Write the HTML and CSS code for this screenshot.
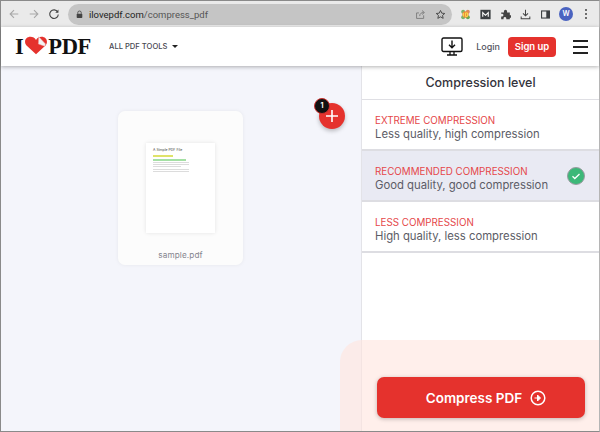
FILE: index.html
```html
<!DOCTYPE html>
<html lang="en">
<head>
  <meta charset="UTF-8">
  <title>Compress PDF</title>
  <link rel="stylesheet" href="styles.css">
</head>
<body>
  <div class="window">
    <div class="toolbar">
      <svg class="tb-icon back" viewBox="0 0 14 14"><path d="M12 7H2.500M7 2.500 2.500 7 7 11.500" fill="none" stroke="#a8a8a8" stroke-width="1.300"/></svg>
      <svg class="tb-icon forward" viewBox="0 0 14 14"><path d="M2 7h9.500M7 2.500 11.500 7 7 11.500" fill="none" stroke="#a8a8a8" stroke-width="1.300"/></svg>
      <svg class="tb-icon reload" viewBox="0 0 14 14"><path d="M11.300 4.600A5 5 0 1 0 12 7.500" fill="none" stroke="#444" stroke-width="1.300"/><path d="M12.200 1.800v3.700H8.500z" fill="#444"/></svg>
      <div class="omnibox">
        <svg class="lock" viewBox="0 0 10 12"><path d="M2.500 5V3.500a2.500 2.500 0 0 1 5 0V5" fill="none" stroke="#444" stroke-width="1.200"/><rect x="1" y="5" width="8" height="6" rx="1" fill="#444"/></svg>
        <span class="url">ilovepdf.com<span class="url-path">/compress_pdf</span></span>
        <svg class="share" viewBox="0 0 14 14"><path d="M11 8v4H2V5h3M6 9c0-3 2-4.500 5-4.500M9 2l3 2.500L9 7" fill="none" stroke="#777" stroke-width="1.100"/></svg>
        <svg class="star" viewBox="0 0 14 14"><path d="m7 1.800 1.600 3.500 3.800.4-2.800 2.500.8 3.700L7 10l-3.400 1.900.8-3.700-2.800-2.500 3.800-.4z" fill="none" stroke="#444" stroke-width="1.200"/></svg>
      </div>
      <div class="ext-icons">
        <svg class="ext" viewBox="0 0 14 14"><circle cx="4" cy="3.500" r="2.500" fill="#7cb368"/><circle cx="10" cy="3.500" r="2.500" fill="#d98a5a"/><circle cx="4" cy="10.500" r="2.500" fill="#7cb368"/><circle cx="10" cy="10.500" r="2.500" fill="#6aa84f"/><circle cx="7" cy="7" r="4" fill="#ee8a3c"/><path d="M4.500 5v4.500M7 5h2.500v4.500H7z" fill="none" stroke="#f6e04a" stroke-width="1.200"/></svg>
        <svg class="ext" viewBox="0 0 14 14"><rect x="0.500" y="1" width="13" height="12" fill="#3c4043"/><path d="M3.500 10V4.500L7 8l3.500-3.500V10" fill="none" stroke="#fff" stroke-width="1.400"/></svg>
        <svg class="ext" viewBox="0 0 14 14"><path d="M1.500 4.500H5V3a2 2 0 0 1 4 0v1.500h3.500V8H14a2 2 0 0 1 0 3h-1.500v2H8v-1.500a1.800 1.800 0 0 0-3.500 0V13h-3V9.500H3a1.800 1.800 0 0 0 0-3.500H1.500z" fill="#444"/></svg>
        <svg class="ext" viewBox="0 0 14 14"><path d="M7 1v7.500M3.800 5.500 7 8.700l3.200-3.200M1.500 9.500V12.500h11V9.500" fill="none" stroke="#444" stroke-width="1.300"/></svg>
        <svg class="ext" viewBox="0 0 14 14"><rect x="2" y="2.500" width="10" height="9" fill="none" stroke="#3c4043" stroke-width="1.400"/><rect x="8" y="2.500" width="4" height="9" fill="#3c4043"/></svg>
        <div class="avatar">W</div>
        <div class="kebab"><i></i><i></i><i></i></div>
      </div>
    </div>

    <header class="navbar">
      <div class="logo">
        <span>I</span>
        <svg class="logo-heart" viewBox="0 0 30 24">
          <path d="M15 23 3 12C-1 7 2 1 8 1c3 0 5.500 1.500 7 4 1.500-2.500 4-4 7-4 6 0 9 6 5 11z" fill="#e5322d"/>
          <path d="M18.500 1 27 10l-1 3-8-3z" fill="#f4f4f4" stroke="#e5a5a5" stroke-width=".6"/>
        </svg>
        <span>PDF</span>
      </div>
      <div class="tools-menu">ALL PDF TOOLS <span class="caret"></span></div>
      <div class="nav-right">
        <svg class="desktop" viewBox="0 0 22 20"><rect x="1" y="1" width="20" height="13.500" rx="1.500" fill="none" stroke="#111" stroke-width="1.400"/><path d="M11 3.500v7M8 7.800l3 3 3-3" fill="none" stroke="#111" stroke-width="1.400"/><path d="M9 14.500v3M13 14.500v3M6 18h10" fill="none" stroke="#111" stroke-width="1.300"/></svg>
        <a class="login">Login</a>
        <a class="signup">Sign up</a>
        <div class="burger"><i></i><i></i><i></i></div>
      </div>
    </header>

    <div class="content">
      <main class="canvas">
        <div class="file-card">
          <div class="page">
            <div class="page-title">A Simple PDF File</div>
            <div class="mark yellow"></div>
            <div class="mark green"></div>
            <div class="line"></div>
            <div class="line"></div>
            <div class="line short"></div>
            <div class="line gap"></div>
            <div class="line"></div>
          </div>
          <div class="file-name">sample.pdf</div>
        </div>
        <div class="add-btn">
          <svg viewBox="0 0 14 14"><path d="M7 1v12M1 7h12" stroke="#fff" stroke-width="1.600"/></svg>
          <span class="count">1</span>
        </div>
      </main>

      <aside class="sidebar">
        <h2 class="side-title">Compression level</h2>
        <div class="option">
          <div class="opt-name">EXTREME COMPRESSION</div>
          <div class="opt-desc">Less quality, high compression</div>
        </div>
        <div class="option active">
          <div class="opt-name">RECOMMENDED COMPRESSION</div>
          <div class="opt-desc">Good quality, good compression</div>
          <svg class="check" viewBox="0 0 18 18"><circle cx="9" cy="9" r="8.500" fill="#3cb878" stroke="#9a9aa0" stroke-width="1"/><path d="m5.500 9.300 2.300 2.200 4.700-4.500" fill="none" stroke="#fff" stroke-width="1.300"/></svg>
        </div>
        <div class="option">
          <div class="opt-name">LESS COMPRESSION</div>
          <div class="opt-desc">High quality, less compression</div>
        </div>
      </aside>

      <div class="process-panel">
        <button class="compress-btn">Compress PDF
          <svg viewBox="0 0 16 16"><circle cx="8" cy="8" r="6.800" fill="none" stroke="#fff" stroke-width="1.500"/><path d="M4.500 8h4M7.500 5 10.500 8 7.500 11z" fill="#fff" stroke="#fff" stroke-width="1"/></svg>
        </button>
      </div>
    </div>
  </div>
</body>
</html>
```

FILE: styles.css
```css
* {
  box-sizing: border-box;
}
html, body {
  margin: 0;
  height: 100%;
  overflow: hidden;
}
body {
  font-family: 'Inter', 'Liberation Sans', sans-serif;
}
.window {
  width: 600px;
  height: 432px;
  display: flex;
  flex-direction: column;
  border: 1px solid #8a8a8a;
  border-right-color: #b5b5b5;
}

/* browser toolbar */
.toolbar {
  height: 26px;
  flex: none;
  display: flex;
  align-items: center;
  background: #eaeaea;
  padding-left: 7px;
}
.tb-icon {
  width: 12px;
  height: 12px;
  margin-right: 8px;
}
.omnibox {
  width: 384px;
  height: 21px;
  border-radius: 11px;
  background: #c5c5c5;
  display: flex;
  align-items: center;
  padding: 0 6px 0 8px;
}
.lock {
  width: 7px;
  height: 9px;
  margin-right: 6px;
}
.url {
  font-family: 'Roboto', sans-serif;
  font-size: 9.500px;
  color: #222;
  flex: 1;
}
.url-path {
  color: #555;
}
.share {
  width: 11px;
  height: 11px;
  margin-right: 9px;
}
.star {
  width: 11px;
  height: 11px;
}
.ext-icons {
  display: flex;
  align-items: center;
  gap: 9px;
  margin-left: 8px;
}
.ext {
  width: 11px;
  height: 11px;
}
.avatar {
  width: 14px;
  height: 14px;
  margin: 0 -1px;
  border-radius: 50%;
  background: #4a63c0;
  color: #fff;
  font-size: 7px;
  font-weight: 600;
  line-height: 14px;
  text-align: center;
}
.kebab {
  display: flex;
  flex-direction: column;
  gap: 2px;
  margin-left: 4px;
}
.kebab i {
  width: 2px;
  height: 2px;
  background: #444;
  border-radius: 50%;
}

/* site nav */
.navbar {
  height: 39px;
  flex: none;
  display: flex;
  align-items: center;
  background: #fff;
  padding-left: 14px;
  box-shadow: 0 1px 4px rgba(0,0,0,0.3);
  position: relative;
  z-index: 2;
}
.logo {
  width: 94px;
  display: flex;
  align-items: center;
  font-family: 'Liberation Serif', serif;
  font-weight: 700;
  font-size: 22.500px;
  letter-spacing: -0.4px;
  color: #111;
}
.logo-heart {
  width: 24px;
  height: 19px;
  margin: -3px 0 0 1px;
}
.tools-menu {
  font-size: 7.600px;
  font-weight: 500;
  color: #47474f;
  display: flex;
  align-items: center;
  gap: 5px;
  white-space: nowrap;
}
.caret {
  width: 0;
  height: 0;
  border-left: 3px solid transparent;
  border-right: 3px solid transparent;
  border-top: 3px solid #222;
}
.nav-right {
  margin-left: auto;
  display: flex;
  align-items: center;
  padding-right: 11px;
}
.desktop {
  width: 22px;
  height: 20px;
  margin-right: 13px;
}
.login {
  font-size: 9px;
  font-weight: 500;
  color: #55555f;
  margin-right: 8px;
}
.signup {
  width: 48px;
  height: 20px;
  line-height: 20px;
  border-radius: 4px;
  background: #e5322d;
  color: #fff;
  font-size: 9.500px;
  font-weight: 600;
  text-align: center;
  margin-right: 17px;
}
.burger {
  display: flex;
  flex-direction: column;
  gap: 4px;
}
.burger i {
  display: block;
  width: 15px;
  height: 2px;
  background: #222;
}

/* main area */
.content {
  flex: 1;
  display: flex;
  position: relative;
  overflow: hidden;
}
.canvas {
  width: 360px;
  flex: none;
  background: #f4f5fb;
  position: relative;
  padding: 45px 0 0 117px;
}
.file-card {
  width: 125px;
  height: 154px;
  background: #fcfcfc;
  border-radius: 7px;
  box-shadow: 0 0 4px rgba(0,0,0,0.06);
  padding-top: 32px;
  display: flex;
  flex-direction: column;
  align-items: center;
}
.page {
  width: 69px;
  height: 90px;
  background: #fff;
  box-shadow: 0 0 4px rgba(0,0,0,0.1);
  padding: 5px 7px;
}
.page-title {
  font-size: 3.500px;
  line-height: 5px;
  color: #444;
  white-space: nowrap;
}
.mark {
  height: 1.500px;
  margin-top: 2px;
}
.mark.yellow {
  width: 20px;
  background: #dfe36a;
}
.mark.green {
  width: 33px;
  margin-top: 2.500px;
  background: #a4e0a4;
}
.line {
  height: 1px;
  width: 36px;
  margin-top: 1px;
  background: #dcdcdc;
}
.line.short {
  width: 28px;
}
.line.gap {
  margin-top: 2px;
}
.file-name {
  margin-top: 17px;
  font-size: 8.200px;
  letter-spacing: 0.1px;
  color: #85858e;
}
.add-btn {
  position: absolute;
  left: 318px;
  top: 37px;
  width: 26px;
  height: 26px;
  border-radius: 50%;
  background: #e5322d;
  box-shadow: 0 2px 4px rgba(0,0,0,0.25);
  display: flex;
  align-items: center;
  justify-content: center;
}
.add-btn svg {
  width: 14px;
  height: 14px;
}
.count {
  position: absolute;
  left: -5px;
  top: -5px;
  width: 16px;
  height: 16px;
  border-radius: 50%;
  background: #111;
  border: 1.500px solid #c9302c;
  color: #fff;
  font-size: 7px;
  font-weight: 700;
  line-height: 13px;
  text-align: center;
}

/* right column */
.sidebar {
  flex: 1;
  background: #fff;
  border-left: 1px solid #e3e3e8;
}
.side-title {
  margin: 0;
  height: 34px;
  line-height: 34px;
  font-size: 12.500px;
  font-weight: 500;
  color: #33333b;
  text-align: center;
  border-bottom: 1px solid #dfdfe4;
}
.option {
  height: 51px;
  padding: 14px 13px 0;
  border-bottom: 2px solid #dddde2;
  position: relative;
}
.option.active {
  background: #e9eaf3;
}
.opt-name {
  font-size: 9.800px;
  line-height: 13px;
  color: #e5474a;
  white-space: nowrap;
}
.opt-desc {
  font-size: 11.300px;
  line-height: 14px;
  color: #5c5c66;
  white-space: nowrap;
}
.check {
  position: absolute;
  right: 14px;
  top: 16px;
  width: 18px;
  height: 18px;
}
.process-panel {
  position: absolute;
  right: 0;
  bottom: 0;
  width: 259px;
  height: 91px;
  background: rgba(255, 228, 222, 0.6);
  border-top-left-radius: 22px;
  padding: 37px 14px 0 37px;
}
.compress-btn {
  width: 208px;
  height: 41px;
  padding: 0 0 0 10px;
  background: #e5322d;
  border: none;
  border-radius: 7px;
  box-shadow: 0 1px 4px rgba(0,0,0,0.25);
  color: #fff;
  font-family: inherit;
  font-size: 13.500px;
  font-weight: 600;
  display: flex;
  align-items: center;
  justify-content: center;
  gap: 8px;
}
.compress-btn svg {
  width: 16px;
  height: 16px;
}
```
